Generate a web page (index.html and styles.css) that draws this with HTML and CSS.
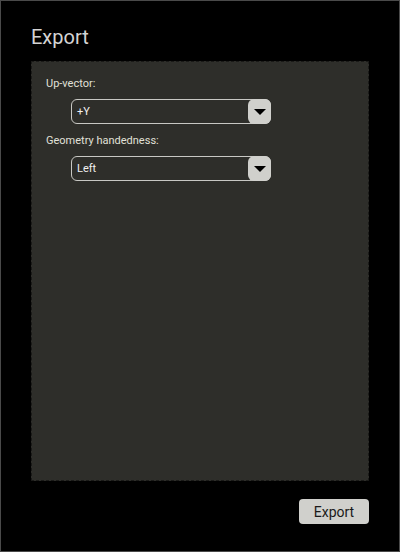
FILE: index.html
```html
<!DOCTYPE html>
<html lang="en">
<head>
    <meta charset="UTF-8">
    <title>Export</title>
    <link rel="stylesheet" href="styles.css">
</head>
<body>
    <div class="dialog">
        <h2>Export</h2>
        <div class="panel">
            <label class="field-label">Up-vector:</label>
            <div class="select">
                <span class="select-value">+Y</span>
                <span class="select-arrow"></span>
            </div>

            <label class="field-label">Geometry handedness:</label>
            <div class="select">
                <span class="select-value">Left</span>
                <span class="select-arrow"></span>
            </div>
        </div>
        <div class="actions">
            <button class="btn">Export</button>
        </div>
    </div>
</body>
</html>
```

FILE: styles.css
```css
body {
    margin: 0;
    padding: 0;
    background-color: #000;
    font-family: Roboto, "Liberation Sans", sans-serif;
}

.dialog {
    width: 400px;
    height: 552px;
    box-sizing: border-box;
    border: 1px solid #4a4a4a;
    padding: 0 30px;
    display: flex;
    flex-direction: column;
}

h2 {
    margin: 24px 0 0;
    height: 36px;
    font-size: 20px;
    font-weight: normal;
    color: #d4d4d4;
    line-height: 24px;
}

.panel {
    height: 420px;
    box-sizing: border-box;
    background-color: #2e2e2a;
    border: 1px dashed #1a1a18;
    padding: 15px 14px;
}

.field-label {
    display: block;
    font-size: 11px;
    line-height: 14px;
    color: #e0e0d8;
}

.select {
    display: flex;
    align-items: center;
    width: 200px;
    height: 25px;
    box-sizing: border-box;
    margin: 8px 0 10px 25px;
    border: 1px solid #c8c8c4;
    border-radius: 6px;
}

.select-value {
    flex: 1;
    padding-left: 5px;
    font-size: 11px;
    color: #f0f0f0;
}

.select-arrow {
    width: 23px;
    height: 25px;
    margin-right: -1px;
    background-color: #d0d0cc;
    border-radius: 6px;
    position: relative;
}

.select-arrow::after {
    content: "";
    position: absolute;
    left: 6px;
    top: 10px;
    border-left: 6px solid transparent;
    border-right: 6px solid transparent;
    border-top: 6px solid #000;
}

.actions {
    display: flex;
    justify-content: flex-end;
    margin-top: 18px;
}

.btn {
    width: 70px;
    height: 25px;
    padding: 0;
    border: none;
    border-radius: 4px;
    background-color: #d0d0cc;
    color: #1a1a1a;
    font-family: Roboto, "Liberation Sans", sans-serif;
    font-size: 14px;
}
```
